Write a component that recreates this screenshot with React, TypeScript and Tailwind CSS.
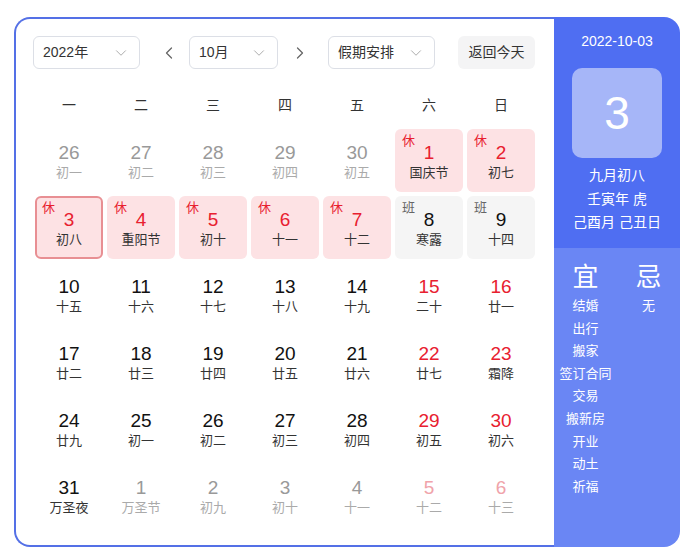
import { ChevronDown, ChevronLeft, ChevronRight } from "lucide-react";

type Day = {
  n: number;
  lunar: string;
  kind?: "other" | "otherWeekend";
  weekend?: boolean;
  tag?: "休" | "班";
  selected?: boolean;
};

const days: Day[] = [
  { n: 26, lunar: "初一", kind: "other" },
  { n: 27, lunar: "初二", kind: "other" },
  { n: 28, lunar: "初三", kind: "other" },
  { n: 29, lunar: "初四", kind: "other" },
  { n: 30, lunar: "初五", kind: "other" },
  { n: 1, lunar: "国庆节", tag: "休" },
  { n: 2, lunar: "初七", tag: "休" },
  { n: 3, lunar: "初八", tag: "休", selected: true },
  { n: 4, lunar: "重阳节", tag: "休" },
  { n: 5, lunar: "初十", tag: "休" },
  { n: 6, lunar: "十一", tag: "休" },
  { n: 7, lunar: "十二", tag: "休" },
  { n: 8, lunar: "寒露", tag: "班" },
  { n: 9, lunar: "十四", tag: "班" },
  { n: 10, lunar: "十五" },
  { n: 11, lunar: "十六" },
  { n: 12, lunar: "十七" },
  { n: 13, lunar: "十八" },
  { n: 14, lunar: "十九" },
  { n: 15, lunar: "二十", weekend: true },
  { n: 16, lunar: "廿一", weekend: true },
  { n: 17, lunar: "廿二" },
  { n: 18, lunar: "廿三" },
  { n: 19, lunar: "廿四" },
  { n: 20, lunar: "廿五" },
  { n: 21, lunar: "廿六" },
  { n: 22, lunar: "廿七", weekend: true },
  { n: 23, lunar: "霜降", weekend: true },
  { n: 24, lunar: "廿九" },
  { n: 25, lunar: "初一" },
  { n: 26, lunar: "初二" },
  { n: 27, lunar: "初三" },
  { n: 28, lunar: "初四" },
  { n: 29, lunar: "初五", weekend: true },
  { n: 30, lunar: "初六", weekend: true },
  { n: 31, lunar: "万圣夜" },
  { n: 1, lunar: "万圣节", kind: "other" },
  { n: 2, lunar: "初九", kind: "other" },
  { n: 3, lunar: "初十", kind: "other" },
  { n: 4, lunar: "十一", kind: "other" },
  { n: 5, lunar: "十二", kind: "otherWeekend" },
  { n: 6, lunar: "十三", kind: "otherWeekend" },
];

const weekdays = ["一", "二", "三", "四", "五", "六", "日"];
const yi = ["结婚", "出行", "搬家", "签订合同", "交易", "搬新房", "开业", "动土", "祈福"];

function Select({ label, w }: { label: string; w: string }) {
  return (
    <div
      className={`${w} h-[33px] flex items-center justify-between pl-[9px] pr-[9px] border border-[#dcdfe6] rounded-[6px] text-[14px] text-[#333]`}
    >
      <span>{label}</span>
      <ChevronDown className="w-[18px] h-[18px] text-[#aaa]" strokeWidth={1.3} />
    </div>
  );
}

function Cell({ d }: { d: Day }) {
  let bg = "";
  let num = "text-[#111]";
  let lun = "text-[#333]";
  if (d.tag === "休") {
    bg = "bg-[#fde2e4]";
    num = "text-[#e8202f]";
  } else if (d.tag === "班") {
    bg = "bg-[#f5f5f5]";
  }
  if (d.weekend) num = "text-[#e8202f]";
  if (d.kind === "other") {
    num = "text-[#999]";
    lun = "text-[#aaa]";
  }
  if (d.kind === "otherWeekend") {
    num = "text-[#f0a3aa]";
    lun = "text-[#aaa]";
  }
  const border = d.selected ? "border-2 border-[#e88f93]" : "";
  return (
    <div className={`relative h-[63px] rounded-[6px] flex flex-col items-center ${bg} ${border} ${d.selected ? "pt-[11px]" : "pt-[13px]"}`}>
      {d.tag && (
        <span
          className={`absolute ${d.selected ? "left-[5px] top-[2px]" : "left-[7px] top-[4px]"} text-[13px] leading-[16px] ${
            d.tag === "休" ? "text-[#e8202f]" : "text-[#666]"
          }`}
        >
          {d.tag}
        </span>
      )}
      <span className={`text-[19px] leading-[22px] ${num}`}>{d.n}</span>
      <span className={`text-[13px] leading-[18px] ${lun}`}>{d.lunar}</span>
    </div>
  );
}

export default function App() {
  return (
    <div
      className="w-[693px] h-[555px] bg-white pt-[17px] pl-[14px]"
      style={{ fontFamily: '"Liberation Sans", "Noto Sans CJK SC", sans-serif' }}
    >
      <div className="flex w-[666px] h-[530px]">
        {/* calendar */}
        <div className="w-[540px] h-full border-2 border-r-0 border-[#5470e6] rounded-l-[16px] bg-white pt-[17px] pl-[17px]">
          <div className="flex items-center h-[33px]">
            <Select label="2022年" w="w-[107px]" />
            <ChevronLeft className="ml-[19px] w-[20px] h-[20px] text-[#666]" strokeWidth={1.5} />
            <div className="ml-[10px]">
              <Select label="10月" w="w-[89px]" />
            </div>
            <ChevronRight className="ml-[12px] w-[20px] h-[20px] text-[#666]" strokeWidth={1.5} />
            <div className="ml-[18px]">
              <Select label="假期安排" w="w-[107px]" />
            </div>
            <div className="ml-[23px] h-[33px] w-[77px] rounded-[6px] bg-[#f4f4f5] flex items-center justify-center text-[14px] text-[#333]">
              返回今天
            </div>
          </div>

          <div className="ml-[2px] mt-[24px] grid grid-cols-[repeat(7,68px)] gap-x-[4px] h-[24px] items-center">
            {weekdays.map((w) => (
              <div key={w} className="text-center text-[14px] text-[#333]">
                {w}
              </div>
            ))}
          </div>

          <div className="ml-[2px] mt-[12px] grid grid-cols-[repeat(7,68px)] gap-x-[4px] gap-y-[4px]">
            {days.map((d, i) => (
              <Cell key={i} d={d} />
            ))}
          </div>
        </div>

        {/* side panel */}
        <div className="w-[126px] h-full rounded-r-[16px] overflow-hidden flex flex-col text-white">
          <div className="h-[231px] bg-[#4f6ef2] flex flex-col items-center pt-[14px]">
            <div className="text-[14px] leading-[20px]">2022-10-03</div>
            <div className="mt-[17px] w-[90px] h-[90px] rounded-[10px] bg-[#a6b6f8] flex items-center justify-center text-[46px] leading-none">
              3
            </div>
            <div className="mt-[6px] text-[14px] leading-[23.5px] text-center">
              <div>九月初八</div>
              <div>壬寅年 虎</div>
              <div>己酉月 己丑日</div>
            </div>
          </div>
          <div className="flex-1 bg-[#6a86f4] flex pt-[14px]">
            <div className="w-[63px] flex flex-col items-center">
              <div className="text-[26px] leading-[30px]">宜</div>
              <div className="mt-[3px] text-[13px] leading-[22.6px] text-center">
                {yi.map((t) => (
                  <div key={t} className="whitespace-nowrap">
                    {t}
                  </div>
                ))}
              </div>
            </div>
            <div className="w-[63px] flex flex-col items-center">
              <div className="text-[26px] leading-[30px]">忌</div>
              <div className="mt-[3px] text-[13px] leading-[22.6px]">无</div>
            </div>
          </div>
        </div>
      </div>
    </div>
  );
}
